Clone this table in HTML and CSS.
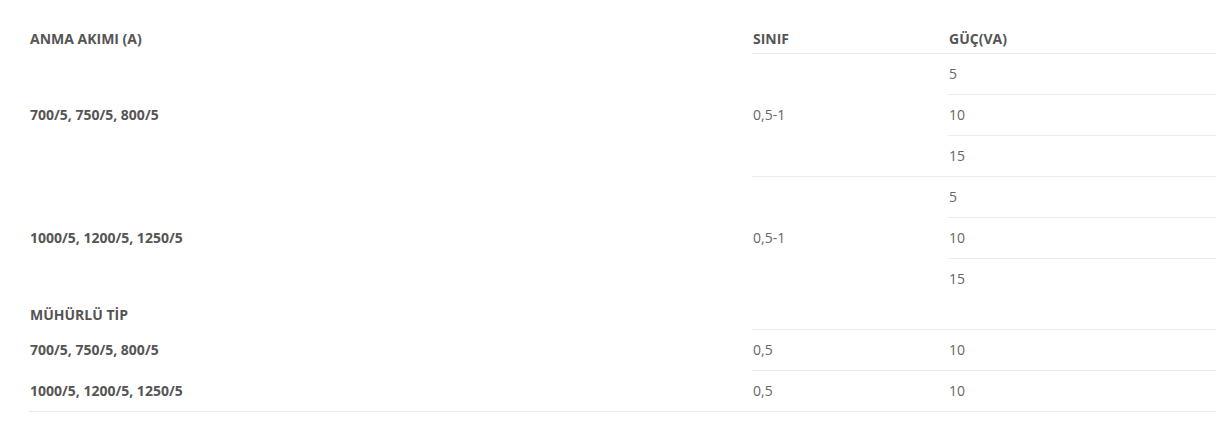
FILE: index.html
```html
<!DOCTYPE html>
<html lang="tr">
<head>
<meta charset="utf-8">
<title>Anma Akımı</title>
<link rel="stylesheet" href="styles.css">
</head>
<body>
<div class="page">
  <table class="spec">
    <colgroup>
      <col class="c1">
      <col class="c2">
      <col class="c3">
    </colgroup>
    <thead>
      <tr>
        <th class="plain">ANMA AKIMI (A)</th>
        <th>SINIF</th>
        <th>GÜÇ(VA)</th>
      </tr>
    </thead>
    <tbody>
      <tr>
        <td class="lead plain" rowspan="3">700/5, 750/5, 800/5</td>
        <td class="mid" rowspan="3">0,5-1</td>
        <td>5</td>
      </tr>
      <tr><td>10</td></tr>
      <tr><td>15</td></tr>
      <tr>
        <td class="lead plain" rowspan="3">1000/5, 1200/5, 1250/5</td>
        <td class="mid plain" rowspan="3">0,5-1</td>
        <td>5</td>
      </tr>
      <tr><td>10</td></tr>
      <tr><td class="plain">15</td></tr>
      <tr class="section">
        <td class="lead plain">MÜHÜRLÜ TİP</td>
        <td></td>
        <td></td>
      </tr>
      <tr>
        <td class="lead plain">700/5, 750/5, 800/5</td>
        <td>0,5</td>
        <td>10</td>
      </tr>
      <tr>
        <td class="lead">1000/5, 1200/5, 1250/5</td>
        <td>0,5</td>
        <td>10</td>
      </tr>
    </tbody>
  </table>
</div>
</body>
</html>
```
FILE: styles.css
```css
html, body {
  margin: 0;
  padding: 0;
  background: #ffffff;
}

.page {
  padding: 19px 0 0 29px;
  font-family: "Open Sans", "Liberation Sans", sans-serif;
  font-size: 14px;
  line-height: 20px;
  color: #666666;
}

.spec {
  width: 100%;
  border-collapse: separate;
  border-spacing: 0;
  table-layout: fixed;
}

.c1 { width: 723px; }
.c2 { width: 196px; }

.spec th,
.spec td {
  padding: 10px 0 10px 1px;
  text-align: left;
  vertical-align: middle;
  border-bottom: 1px solid #ebebeb;
}

.spec th {
  padding: 10px 0 4px 1px;
  font-weight: 700;
  color: #555555;
  text-transform: uppercase;
}

.spec .plain {
  border-bottom-color: transparent;
}

.spec .lead {
  font-weight: 700;
  color: #555555;
}

.spec .section td {
  padding: 5px 0 4px 1px;
}
```
